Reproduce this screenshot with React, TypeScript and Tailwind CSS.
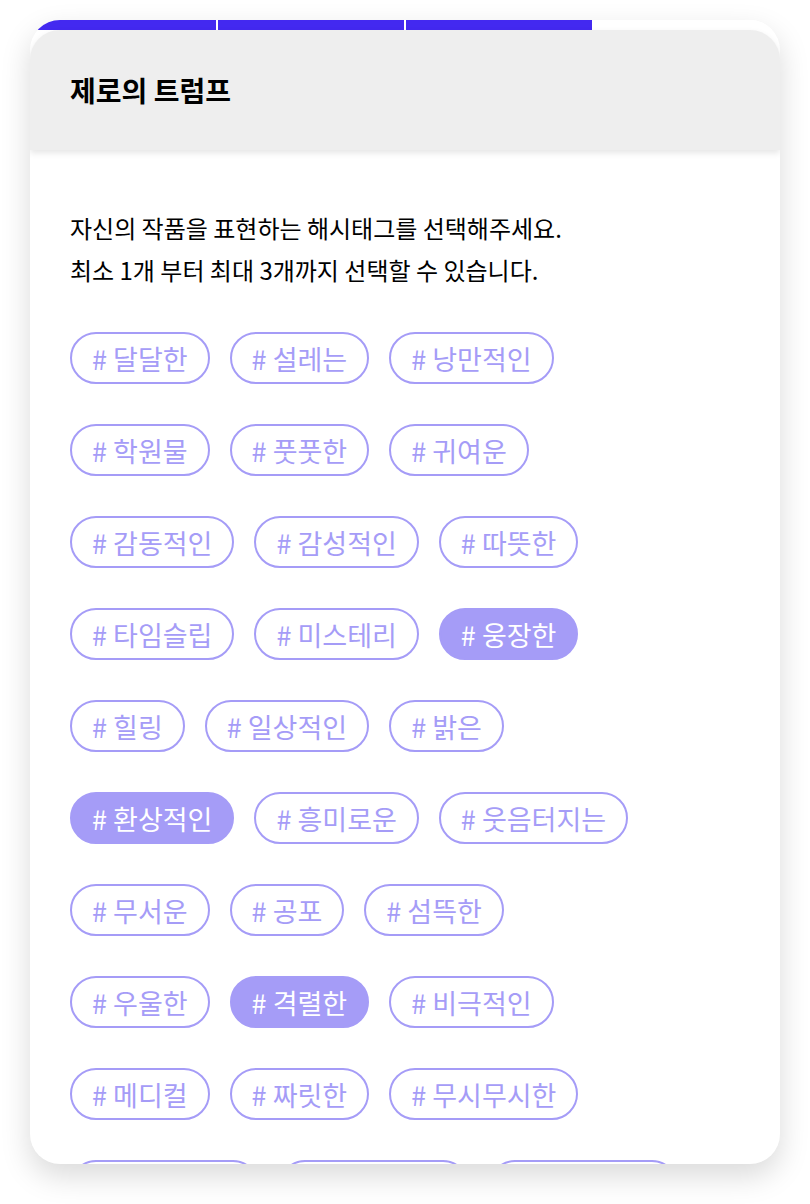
import React from 'react'

const rows: { label: string; on?: boolean }[][] = [
  [{ label: '달달한' }, { label: '설레는' }, { label: '낭만적인' }],
  [{ label: '학원물' }, { label: '풋풋한' }, { label: '귀여운' }],
  [{ label: '감동적인' }, { label: '감성적인' }, { label: '따뜻한' }],
  [{ label: '타임슬립' }, { label: '미스테리' }, { label: '웅장한', on: true }],
  [{ label: '힐링' }, { label: '일상적인' }, { label: '밝은' }],
  [{ label: '환상적인', on: true }, { label: '흥미로운' }, { label: '웃음터지는' }],
  [{ label: '무서운' }, { label: '공포' }, { label: '섬뜩한' }],
  [{ label: '우울한' }, { label: '격렬한', on: true }, { label: '비극적인' }],
  [{ label: '메디컬' }, { label: '짜릿한' }, { label: '무시무시한' }],
  [{ label: '아슬아슬한' }, { label: '몽글몽글한' }, { label: '신비스러운' }],
]

const steps = [true, true, true, false]

export default function App() {
  return (
    <div
      className="min-h-[1204px] bg-white pt-[20px] px-[30px]"
      style={{ fontFamily: "'Noto Sans CJK KR', 'Noto Sans', sans-serif" }}
    >
      <div className="h-[1144px] rounded-[30px] bg-white overflow-hidden flex flex-col shadow-[0_12px_30px_rgba(0,0,0,0.15)]">
        {/* progress */}
        <div className="flex gap-[2px] h-[10px] shrink-0">
          {steps.map((s, i) => (
            <div key={i} className={`flex-1 ${s ? 'bg-[#4329f0]' : 'bg-white'}`} />
          ))}
        </div>

        {/* header */}
        <div className="relative z-10 h-[120px] shrink-0 flex items-center px-[40px] bg-[#eeeeee] rounded-t-[30px] shadow-[0_3px_6px_rgba(0,0,0,0.1)]">
          <h1 className="text-[28px] font-bold text-black leading-none">제로의 트럼프</h1>
        </div>

        {/* body */}
        <div className="px-[40px] pt-[57px]">
          <p className="text-[24px] leading-[42px] text-black">
            자신의 작품을 표현하는 해시태그를 선택해주세요.
            <br />
            최소 1개 부터 최대 3개까지 선택할 수 있습니다.
          </p>

          <div className="mt-[41px] flex flex-col gap-[40px]">
            {rows.map((row, i) => (
              <div key={i} className="flex gap-[20px]">
                {row.map((t) => (
                  <button
                    key={t.label}
                    className={`h-[52px] px-[20px] rounded-full border-2 border-[#a59cf7] text-[27px] leading-none flex items-center ${
                      t.on ? 'bg-[#a59cf7] text-white' : 'bg-white text-[#a59cf7]'
                    }`}
                  >
                    # {t.label}
                  </button>
                ))}
              </div>
            ))}
          </div>
        </div>
      </div>
    </div>
  )
}
